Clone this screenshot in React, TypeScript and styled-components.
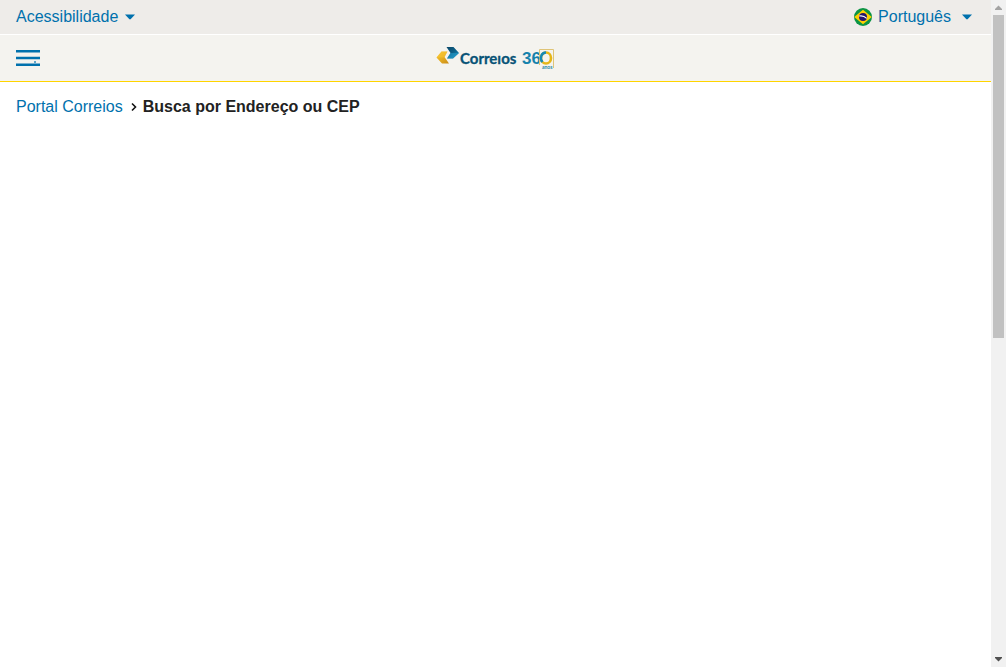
import React from "react";
import styled, { createGlobalStyle } from "styled-components";

const blue = "#0071ad";

const GlobalStyle = createGlobalStyle`
  *, *::before, *::after { box-sizing: border-box; }
  body {
    margin: 0;
    background: #fff;
    color: #222;
    font-family: "Liberation Sans", Arial, sans-serif;
    font-size: 16px;
    line-height: 18px;
  }
`;

const Page = styled.div`
  display: grid;
  grid-template-columns: minmax(0, 1fr) 15px;
  min-height: 100vh;
`;

const TopBar = styled.nav`
  display: flex;
  justify-content: space-between;
  align-items: center;
  height: 35px;
  padding: 0 19px 1px 16px;
  background: #eeece9;
  border-bottom: 1px solid #fff;
`;

const MenuButton = styled.button<{ $gap: number }>`
  display: flex;
  align-items: center;
  padding: 0;
  border: 0;
  background: none;
  color: ${blue};
  font: inherit;
  cursor: pointer;

  & > svg:last-child { margin-left: ${(p) => p.$gap}px; }
  & > svg:first-child { margin-right: 6px; }
`;

const Header = styled.header`
  display: grid;
  grid-template-columns: 1fr auto 1fr;
  align-items: center;
  height: 47px;
  padding: 0 16px;
  background: #f4f3ef;
  border-bottom: 1px solid #ffd400;
`;

const IconButton = styled.button`
  display: flex;
  justify-self: start;
  padding: 0;
  border: 0;
  background: none;
  cursor: pointer;
`;

const LogoLink = styled.a`
  display: flex;
`;

const Breadcrumb = styled.nav`
  display: flex;
  align-items: center;
  padding: 16px;
`;

const CrumbLink = styled.a`
  color: ${blue};
  text-decoration: none;
`;

const Separator = styled.svg`
  margin: 0 5px 0 8px;
`;

const ScrollRail = styled.div`
  display: flex;
  flex-direction: column;
  align-items: center;
  background: #f1f1f1;
`;

const ScrollTrack = styled.div`
  flex: 1;
  display: grid;
  grid-template-rows: 323fr 314fr;
  width: 11px;
`;

const Thumb = styled.div`
  background: #c1c1c1;
`;

const Caret = () => (
  <svg width="10" height="6" viewBox="0 0 10 6" aria-hidden="true">
    <path d="M0 0.5H10L5.8 5Q5 5.8 4.2 5Z" fill={blue} />
  </svg>
);

const BrazilFlag = () => (
  <svg width="18" height="18" viewBox="0 0 18 18" aria-hidden="true">
    <circle cx="9" cy="9" r="9" fill="#0b9444" />
    <path d="M9 1.8L17.8 9L9 16.2L0.2 9Z" fill="#ffcf00" />
    <circle cx="9" cy="9" r="4" fill="#27156b" />
    <path d="M5.2 8Q9.5 7.2 12.7 10.3" fill="none" stroke="#fff" strokeWidth="1.1" />
  </svg>
);

const MenuIcon = () => (
  <svg width="24" height="16" viewBox="0 0 24 16" aria-hidden="true">
    <path d="M0 0H24V2.6H0ZM0 6.7H24V9.3H0ZM0 13.4H24V16H0Z" fill={blue} />
    <path d="M18 11h2v2h-2Z" fill={blue} opacity="0.6" />
  </svg>
);

const Logo = () => (
  <svg width="119" height="24" viewBox="0 0 119 24" role="img" aria-label="Correios 360 anos">
    <defs>
      <linearGradient id="gold" x1="0" y1="0" x2="1" y2="1">
        <stop offset="0" stopColor="#f6c431" />
        <stop offset="0.5" stopColor="#e5ad22" />
        <stop offset="1" stopColor="#c98b18" />
      </linearGradient>
      <linearGradient id="sea" x1="0" y1="0" x2="1" y2="1">
        <stop offset="0" stopColor="#0b4767" />
        <stop offset="0.5" stopColor="#0d6189" />
        <stop offset="1" stopColor="#1c9ccb" />
      </linearGradient>
    </defs>
    <path d="M5.5 5.5H11.5L8.5 11L13 17.5H6L0.5 11.5Z" fill="url(#gold)" />
    <path d="M5.5 5.5H11.5L8.5 11.5H0.5Z" fill="#ffce38" opacity="0.4" />
    <path d="M10.5 1H17.5L23 7L17 12.5H11L14.5 7Z" fill="url(#sea)" />
    <path d="M11 12.5L14.5 7H23L17 12.5Z" fill="#28a4d4" opacity="0.5" />
    <text x="24" y="18" fill="#075276" stroke="#075276" strokeWidth="0.3" fontFamily="Lato, sans-serif" fontSize="15" fontWeight="700">Correıos</text>
    <text x="86" y="18" fill="#1682ac" fontFamily="Liberation Sans, Arial, sans-serif" fontSize="17" fontWeight="700">36</text>
    <path d="M103.5 19V3.5H117.5V22" fill="none" stroke="#dfc477" strokeWidth="1" />
    <ellipse cx="110" cy="12" rx="5" ry="5.5" fill="#f4f3ef" stroke="#e5b618" strokeWidth="2.6" />
    <path d="M110 6.5A5 5.5 0 0 0 106.5 16" fill="none" stroke="#1689b5" strokeWidth="2.4" />
    <text x="106" y="23" fill="#2486a8" fontFamily="Lato, sans-serif" fontSize="5" fontWeight="700">anos</text>
  </svg>
);

const ScrollArrow = ({ down = false }: { down?: boolean }) => (
  <svg width="15" height="15" viewBox="0 0 15 15" aria-hidden="true">
    <path d={down ? "M4 5H11V6L7.5 9.5L4 6Z" : "M4 10H11V9L7.5 5.5L4 9Z"} fill={down ? "#505050" : "#a3a3a3"} />
  </svg>
);

export default function App() {
  return (
    <>
      <GlobalStyle />
      <Page>
        <div>
          <TopBar aria-label="Preferências">
            <MenuButton type="button" $gap={7}>
              Acessibilidade
              <Caret />
            </MenuButton>
            <MenuButton type="button" $gap={11}>
              <BrazilFlag />
              Português
              <Caret />
            </MenuButton>
          </TopBar>
          <Header>
            <IconButton type="button" aria-label="Menu">
              <MenuIcon />
            </IconButton>
            <LogoLink href="#">
              <Logo />
            </LogoLink>
          </Header>
          <Breadcrumb aria-label="Trilha de navegação">
            <CrumbLink href="#">Portal Correios</CrumbLink>
            <Separator width="7" height="10" viewBox="0 0 7 10" aria-hidden="true">
              <path d="M1 1.5L4.5 5L1 8.5" fill="none" stroke="#111" strokeWidth="1.6" />
            </Separator>
            <strong>Busca por Endereço ou CEP</strong>
          </Breadcrumb>
        </div>
        <ScrollRail aria-hidden="true">
          <ScrollArrow />
          <ScrollTrack>
            <Thumb />
          </ScrollTrack>
          <ScrollArrow down />
        </ScrollRail>
      </Page>
    </>
  );
}
